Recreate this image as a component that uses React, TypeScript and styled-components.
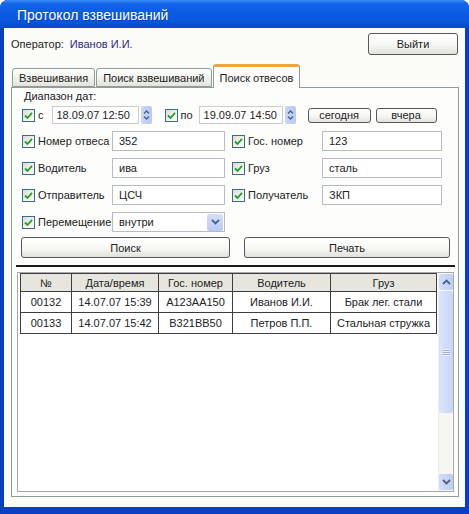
import styled, { createGlobalStyle } from "styled-components";

const GlobalStyle = createGlobalStyle`
  html, body { margin: 0; padding: 0; background: #ffffff; }
  body {
    font-family: "Liberation Sans", Arial, sans-serif;
    font-size: 11px;
    color: #1e1e1e;
  }
  * { box-sizing: border-box; }
`;

type Row = { id: string; date: string; plate: string; driver: string; cargo: string };

const rows: Row[] = [
  { id: "00132", date: "14.07.07 15:39", plate: "A123AA150", driver: "Иванов И.И.", cargo: "Брак лег. стали" },
  { id: "00133", date: "14.07.07 15:42", plate: "B321BB50", driver: "Петров П.П.", cargo: "Стальная стружка" },
];

const columns = [
  { title: "№", width: 51 },
  { title: "Дата/время", width: 87 },
  { title: "Гос. номер", width: 74 },
  { title: "Водитель", width: 98 },
  { title: "Груз", width: 106 },
];

function Check() {
  return (
    <CheckBox>
      <svg width="9" height="9" viewBox="0 0 9 9">
        <path d="M1 4.5 L3.5 7 L8 1.8" stroke="#21a121" strokeWidth="1.8" fill="none" />
      </svg>
    </CheckBox>
  );
}

function Spinner() {
  return (
    <SpinBox>
      <svg width="7" height="12" viewBox="0 0 7 12">
        <path d="M1 4.5 L3.5 2 L6 4.5" stroke="#4a5f9c" strokeWidth="1.4" fill="none" />
        <path d="M1 7.5 L3.5 10 L6 7.5" stroke="#4a5f9c" strokeWidth="1.4" fill="none" />
      </svg>
    </SpinBox>
  );
}

function Chevron({ up }: { up?: boolean }) {
  return (
    <svg width="9" height="6" viewBox="0 0 9 6">
      <path
        d={up ? "M1 5 L4.5 1.5 L8 5" : "M1 1 L4.5 4.5 L8 1"}
        stroke="#4d6185"
        strokeWidth="1.8"
        fill="none"
      />
    </svg>
  );
}

function Field({ label, value, left }: { label: string; value: string; left?: number }) {
  return (
    <>
      <CheckLabel $left={left}>
        <Check />
        <span>{label}</span>
      </CheckLabel>
      <TextInput>{value}</TextInput>
    </>
  );
}

export default function App() {
  return (
    <>
      <GlobalStyle />
      <Window>
        <TitleBar>Протокол взвешиваний</TitleBar>
        <Client>
          <OperatorRow>
            <OperatorLabel>
              Оператор:<OperatorName>Иванов И.И.</OperatorName>
            </OperatorLabel>
            <Button $width={90} $height={22}>Выйти</Button>
          </OperatorRow>

          <TabStrip>
            <Tab>Взвешивания</Tab>
            <Tab>Поиск взвешиваний</Tab>
            <Tab $active>Поиск отвесов</Tab>
          </TabStrip>

          <Panel>
            <RangeLabel>Диапазон дат:</RangeLabel>
            <DateRow>
              <CheckLabel>
                <Check />
                <span>с</span>
              </CheckLabel>
              <DateInput $width={87} $left={8}>18.09.07 12:50</DateInput>
              <Spinner />
              <CheckLabel $left={13}>
                <Check />
                <span>по</span>
              </CheckLabel>
              <DateInput $width={84} $left={6}>19.09.07 14:50</DateInput>
              <Spinner />
              <Button $width={63} $height={15} $left={12}>сегодня</Button>
              <Button $width={61} $height={15} $left={5}>вчера</Button>
            </DateRow>

            <FieldsGrid>
              <Field label="Номер отвеса" value="352" />
              <Field label="Гос. номер" value="123" left={7} />
              <Field label="Водитель" value="ива" />
              <Field label="Груз" value="сталь" left={7} />
              <Field label="Отправитель" value="ЦСЧ" />
              <Field label="Получатель" value="ЗКП" left={7} />
              <CheckLabel>
                <Check />
                <span>Перемещение</span>
              </CheckLabel>
              <Select>
                <span>внутри</span>
                <SelectArrow>
                  <Chevron />
                </SelectArrow>
              </Select>
            </FieldsGrid>

            <ActionRow>
              <Button $height={21}>Поиск</Button>
              <Button $height={21}>Печать</Button>
            </ActionRow>

            <Divider />

            <TableBox>
              <TableArea>
                <Table>
                  <colgroup>
                    {columns.map((c) => (
                      <col key={c.title} style={{ width: c.width }} />
                    ))}
                  </colgroup>
                  <thead>
                    <tr>
                      {columns.map((c) => (
                        <Th key={c.title}>{c.title}</Th>
                      ))}
                    </tr>
                  </thead>
                  <tbody>
                    {rows.map((r) => (
                      <tr key={r.id}>
                        <Td>{r.id}</Td>
                        <Td>{r.date}</Td>
                        <Td>{r.plate}</Td>
                        <Td>{r.driver}</Td>
                        <Td>{r.cargo}</Td>
                      </tr>
                    ))}
                  </tbody>
                </Table>
              </TableArea>
              <ScrollBar>
                <ScrollButton>
                  <Chevron up />
                </ScrollButton>
                <ScrollThumb>
                  <Grip />
                </ScrollThumb>
                <ScrollTrack />
                <ScrollButton>
                  <Chevron />
                </ScrollButton>
              </ScrollBar>
            </TableBox>
          </Panel>
        </Client>
      </Window>
    </>
  );
}

const Window = styled.div`
  width: 469px;
  height: 514px;
  display: flex;
  flex-direction: column;
  background: #0a3fc4;
  border-radius: 8px 8px 0 0;
  overflow: hidden;
`;

const TitleBar = styled.div`
  height: 28px;
  flex-shrink: 0;
  display: flex;
  align-items: center;
  padding: 2px 0 0 17px;
  color: #ffffff;
  font-size: 14px;
  background: linear-gradient(
    to bottom,
    #3d8ff8 0%,
    #1466ea 12%,
    #0c5ce4 40%,
    #0a57de 75%,
    #0848c8 100%
  );
  text-shadow: 1px 1px 0 rgba(0, 20, 90, 0.35);
`;

const Client = styled.div`
  flex: 1;
  margin: 0 4px 7px 4px;
  padding: 5px 6px 10px 7px;
  background: #fbfbf8;
  display: flex;
  flex-direction: column;
`;

const OperatorRow = styled.div`
  height: 22px;
  display: flex;
  align-items: center;
  justify-content: space-between;
  padding-right: 1px;
`;

const OperatorLabel = styled.div`
  color: #222;
`;

const OperatorName = styled.span`
  margin-left: 6px;
  color: #2d2a82;
`;

const Button = styled.div<{ $width?: number; $height: number; $left?: number }>`
  ${(p) => (p.$width ? `width: ${p.$width}px;` : "")}
  height: ${(p) => p.$height}px;
  margin-left: ${(p) => p.$left ?? 0}px;
  flex-shrink: 0;
  display: flex;
  align-items: center;
  justify-content: center;
  border: 1px solid #55585e;
  border-radius: 3px;
  background: linear-gradient(to bottom, #ffffff 0%, #f6f6f3 55%, #e2e2dc 100%);
  color: #222;
  font-size: 11px;
`;

const TabStrip = styled.div`
  margin-top: 8px;
  height: 24px;
  display: flex;
  align-items: flex-end;
  padding-left: 1px;
  position: relative;
  z-index: 1;
`;

const Tab = styled.div<{ $active?: boolean }>`
  height: ${(p) => (p.$active ? 24 : 19)}px;
  margin-bottom: ${(p) => (p.$active ? -1 : 0)}px;
  margin-right: 1px;
  padding: 0 6px;
  display: flex;
  align-items: center;
  padding-top: ${(p) => (p.$active ? 1 : 0)}px;
  border: 1px solid #919b9c;
  border-bottom: ${(p) => (p.$active ? "none" : "1px solid #919b9c")};
  border-top: ${(p) => (p.$active ? "3px solid #f0a63c" : "1px solid #919b9c")};
  border-radius: 3px 3px 0 0;
  background: ${(p) =>
    p.$active ? "#fdfdfc" : "linear-gradient(to bottom, #fefefe, #f0f0ea 60%, #e4e4dd)"};
  color: #222;
  white-space: nowrap;
`;

const Panel = styled.div`
  flex: 1;
  border: 1px solid #919b9c;
  background: #fdfdfc;
  padding: 1px 4px 4px 10px;
  display: flex;
  flex-direction: column;
`;

const RangeLabel = styled.div`
  height: 14px;
  padding-left: 2px;
  display: flex;
  align-items: center;
  color: #222;
`;

const DateRow = styled.div`
  margin-top: 3px;
  height: 18px;
  display: flex;
  align-items: center;
`;

const CheckLabel = styled.div<{ $left?: number }>`
  display: flex;
  align-items: center;
  gap: 3px;
  margin-left: ${(p) => p.$left ?? 0}px;
  color: #222;
  white-space: nowrap;
`;

const CheckBox = styled.div`
  width: 13px;
  height: 13px;
  flex-shrink: 0;
  display: flex;
  align-items: center;
  justify-content: center;
  border: 1px solid #3c6a8e;
  background: linear-gradient(135deg, #dcdcd5 0%, #f4f4f0 60%, #ffffff 100%);
`;

const DateInput = styled.div<{ $width: number; $left: number }>`
  width: ${(p) => p.$width}px;
  height: 18px;
  margin-left: ${(p) => p.$left}px;
  padding-left: 4px;
  display: flex;
  align-items: center;
  border: 1px solid #c8cdd3;
  background: #ffffff;
  color: #222;
`;

const SpinBox = styled.div`
  width: 11px;
  height: 18px;
  margin-left: 2px;
  display: flex;
  align-items: center;
  justify-content: center;
  border-radius: 2px;
  background: linear-gradient(to right, #c9d6f6, #b8c9f2);
`;

const FieldsGrid = styled.div`
  margin-top: 7px;
  display: grid;
  grid-template-columns: 90px 113px 97px 120px;
  grid-template-rows: 20px 20px 20px 20px;
  row-gap: 7px;
  align-items: center;
`;

const TextInput = styled.div`
  height: 20px;
  padding-left: 6px;
  display: flex;
  align-items: center;
  border: 1px solid #b5bcc4;
  background: #ffffff;
  color: #222;
`;

const Select = styled(TextInput)`
  justify-content: space-between;
  padding-right: 1px;
`;

const SelectArrow = styled.div`
  width: 16px;
  height: 17px;
  display: flex;
  align-items: center;
  justify-content: center;
  border-radius: 2px;
  background: linear-gradient(to bottom, #d6dffa, #b9c9f4);
`;

const ActionRow = styled.div`
  margin-top: 5px;
  margin-left: -1px;
  display: grid;
  grid-template-columns: 209px 206px;
  column-gap: 14px;
`;

const Divider = styled.div`
  margin: 7px 0 0 -6px;
  width: 439px;
  height: 2px;
  background: #1c1c1c;
`;

const TableBox = styled.div`
  margin: 5px 0 0 -5px;
  width: 437px;
  flex: 1;
  display: flex;
  border: 1px solid #a9a9a9;
  background: #ffffff;
  padding: 0 0 0 1px;
`;

const TableArea = styled.div`
  flex: 1;
  padding: 0 1px;
`;

const Table = styled.table`
  border-collapse: collapse;
  table-layout: fixed;
  width: 416px;
  font-size: 11px;
`;

const Th = styled.th`
  height: 18px;
  padding: 0;
  font-weight: normal;
  text-align: center;
  background: #e6e6de;
  border: 1px solid #3e3e3e;
  color: #222;
`;

const Td = styled.td`
  height: 21px;
  padding: 0;
  text-align: center;
  border: 1px solid #3e3e3e;
  background: #ffffff;
  color: #222;
  white-space: nowrap;
`;

const ScrollBar = styled.div`
  width: 17px;
  display: flex;
  flex-direction: column;
  background: #f6f6f2;
  border-left: 1px solid #eeeeea;
  padding: 1px 0 1px 0;
`;

const ScrollButton = styled.div`
  height: 16px;
  display: flex;
  align-items: center;
  justify-content: center;
  border-radius: 2px;
  background: linear-gradient(to right, #d2ddfa, #bccdf5);
`;

const ScrollThumb = styled.div`
  height: 122px;
  margin-top: 1px;
  display: flex;
  align-items: center;
  justify-content: center;
  border-radius: 2px;
  background: linear-gradient(to right, #dbe4fb, #c6d4f7);
`;

const Grip = styled.div`
  width: 7px;
  height: 7px;
  background: repeating-linear-gradient(to bottom, #eef2fd 0 1px, #9fb2e6 1px 2px);
`;

const ScrollTrack = styled.div`
  flex: 1;
`;
